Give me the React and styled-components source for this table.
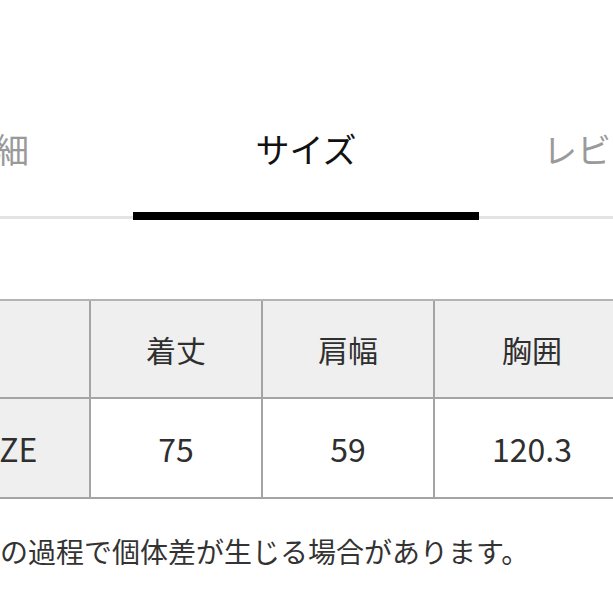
import React from "react";
import styled, { createGlobalStyle } from "styled-components";

const GlobalStyle = createGlobalStyle`
  html, body {
    margin: 0;
    padding: 0;
    background: #fff;
    overflow: hidden;
  }
  body {
    font-family: "Noto Sans CJK JP", "Noto Sans", sans-serif;
    color: #333;
  }
  * {
    box-sizing: border-box;
  }
`;

// the screenshot is a zoomed crop of a wider page, so the page starts left of the window
const Page = styled.div`
  width: 1000px;
  margin-left: -143px;
  display: flex;
  flex-direction: column;
`;

const Tabs = styled.div`
  margin-top: 132px;
  display: flex;
  border-bottom: 3px solid #e4e4e4;
`;

const Tab = styled.div`
  position: relative;
  flex: none;
  width: ${(p) => p.w}px;
  padding-bottom: 50px;
  text-align: center;
  font-size: 34px;
  line-height: 34px;
  color: ${(p) => (p.active ? "#111" : "#9a9a9a")};

  ${(p) =>
    p.active &&
    `
    &::after {
      content: "";
      position: absolute;
      left: 0;
      right: 0;
      bottom: -4px;
      height: 8px;
      background: #000;
    }
  `}
`;

const SizeTable = styled.div`
  margin: 80px 0 0 60px;
  display: grid;
  grid-template-columns: 172px 172px 172px 196px;
  grid-template-rows: 98px 100px;
  width: max-content;
  border-top: 2px solid #b4b4b4;
  border-left: 2px solid #a4a4a4;
`;

const Cell = styled.div`
  display: flex;
  align-items: center;
  justify-content: center;
  border-right: 2px solid #a4a4a4;
  border-bottom: 2px solid #a4a4a4;
  background: ${(p) => (p.gray ? "#efefef" : "#fff")};
  font-size: ${(p) => (p.head ? 30 : 32)}px;
  line-height: 1;
  color: #2f2f2f;
  white-space: nowrap;
`;

const Note = styled.p`
  margin: 38px 0 0 87px;
  font-size: 28px;
  line-height: 28px;
  color: #333;
  white-space: nowrap;
`;

const heads = ["", "着丈", "肩幅", "胸囲"];
const values = ["SIZE", "75", "59", "120.3"];

export default function App() {
  return (
    <>
      <GlobalStyle />
      <Page>
        <Tabs>
          <Tab w={276}>詳細</Tab>
          <Tab w={346} active>
            サイズ
          </Tab>
          <Tab w={264}>レビュー</Tab>
        </Tabs>
        <SizeTable>
          {heads.map((h, i) => (
            <Cell key={"h" + i} head gray>
              {h}
            </Cell>
          ))}
          {values.map((v, i) => (
            <Cell key={"v" + i} gray={i === 0}>
              {v}
            </Cell>
          ))}
        </SizeTable>
        <Note>製造の過程で個体差が生じる場合があります。</Note>
      </Page>
    </>
  );
}
